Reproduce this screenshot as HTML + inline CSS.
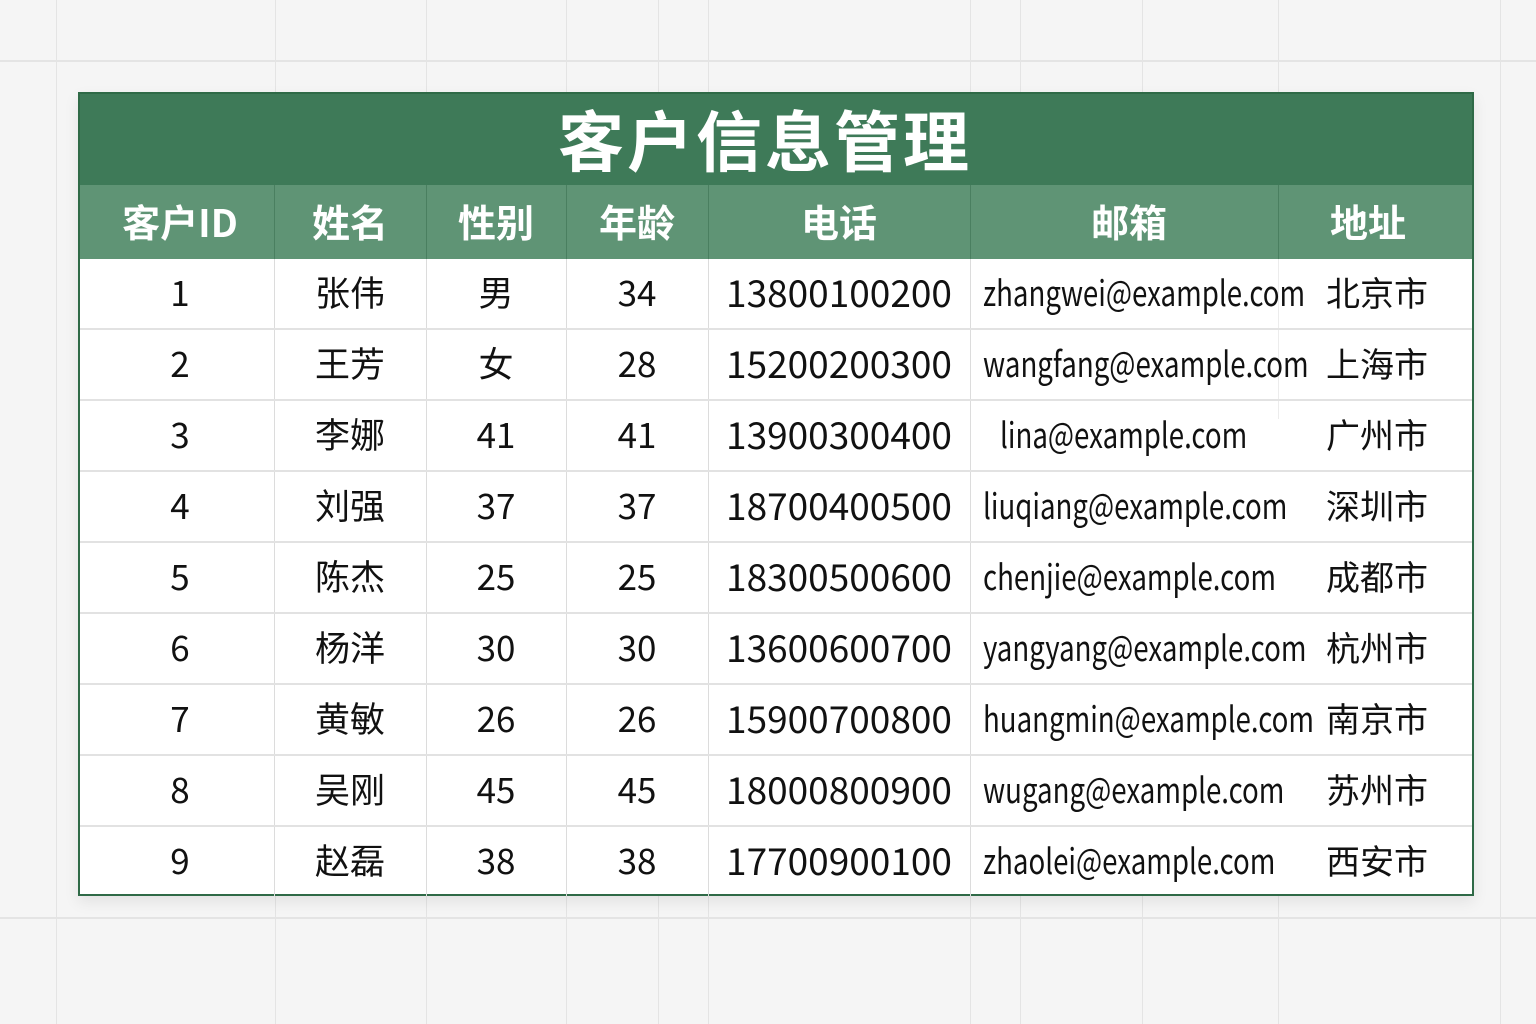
<!DOCTYPE html>
<html><head><meta charset="utf-8"><style>
*{margin:0;padding:0;box-sizing:border-box}
body{width:1536px;height:1024px;background:#f5f5f5;position:relative;overflow:hidden;font-family:"Liberation Sans","Noto Sans CJK SC",sans-serif}
.v{position:absolute;top:0;width:1px;height:1024px;background:#e4e4e4}
.h{position:absolute;left:0;height:2px;width:1536px;background:#e4e4e4}
#tbl{position:absolute;left:78px;top:92px;width:1396px;height:804px;background:#fff;border:2px solid #2f6a47;box-shadow:0 6px 14px rgba(0,0,0,.08)}
#title{position:absolute;left:0;top:0;width:100%;height:91px;background:#3e7a58;color:#fff;font:700 66px "Noto Sans CJK SC",sans-serif;text-align:center;line-height:88px;letter-spacing:3px;padding-right:22px}
#hdr{position:absolute;left:0;top:91px;width:100%;height:74px;background:#5f9475}
.t{position:absolute;font-family:"Noto Sans CJK SC",sans-serif;text-align:center;white-space:nowrap;color:#111}
.hd{color:#fff;font-weight:700;font-size:38px;line-height:72px;top:91px}
.cl{position:absolute;width:1px;background:#dcdcdc}
.hl{position:absolute;left:0;width:100%;height:2px;background:#e2e2e2}
.c{font-size:35px;height:71px;line-height:71px}
.e{position:absolute;font-family:"Noto Sans CJK SC",sans-serif;font-size:35px;line-height:71px;height:71px;transform:scaleX(.79);transform-origin:left center;white-space:nowrap;color:#111}
</style></head><body>
<div class="h" style="top:60px"></div><div class="h" style="top:917px"></div>
<div class="v" style="left:56px"></div><div class="v" style="left:275px"></div><div class="v" style="left:426px"></div><div class="v" style="left:566px"></div><div class="v" style="left:658px"></div><div class="v" style="left:708px"></div><div class="v" style="left:970px"></div><div class="v" style="left:1020px"></div><div class="v" style="left:1142px"></div><div class="v" style="left:1278px"></div><div class="v" style="left:1500px"></div>
<div id="tbl">
<div id="title">客户信息管理</div>
<div id="hdr"></div>
<div class="cl" style="left:194px;top:91px;height:711px"></div>
<div class="cl" style="left:346px;top:91px;height:711px"></div>
<div class="cl" style="left:486px;top:91px;height:711px"></div>
<div class="cl" style="left:628px;top:91px;height:711px"></div>
<div class="cl" style="left:890px;top:91px;height:711px"></div>
<div class="cl" style="left:1198px;top:91px;height:234px;background:#ececec"></div>
<div style="position:absolute;left:194px;top:91px;width:1px;height:74px;background:#4a7f60"></div>
<div style="position:absolute;left:346px;top:91px;width:1px;height:74px;background:#4a7f60"></div>
<div style="position:absolute;left:486px;top:91px;width:1px;height:74px;background:#4a7f60"></div>
<div style="position:absolute;left:628px;top:91px;width:1px;height:74px;background:#4a7f60"></div>
<div style="position:absolute;left:890px;top:91px;width:1px;height:74px;background:#4a7f60"></div>
<div style="position:absolute;left:1198px;top:91px;width:1px;height:74px;background:#4a7f60"></div>
<div class="t hd" style="left:0;width:200px">客户ID</div>
<div class="t hd" style="left:194px;width:152px">姓名</div>
<div class="t hd" style="left:346px;width:140px">性别</div>
<div class="t hd" style="left:486px;width:142px">年龄</div>
<div class="t hd" style="left:628px;width:262px">电话</div>
<div class="t hd" style="left:890px;width:318px">邮箱</div>
<div class="t hd" style="left:1198px;width:180px">地址</div>
<div class="hl" style="top:234px"></div><div class="hl" style="top:305px"></div><div class="hl" style="top:376px"></div><div class="hl" style="top:447px"></div><div class="hl" style="top:518px"></div><div class="hl" style="top:589px"></div><div class="hl" style="top:660px"></div><div class="hl" style="top:731px"></div>
</div>
<div id="rows"></div>
<script>
var d=[["1","张伟","男","34","13800100200","zhangwei@example.com","北京市",983],
["2","王芳","女","28","15200200300","wangfang@example.com","上海市",983],
["3","李娜","41","41","13900300400","lina@example.com","广州市",1000],
["4","刘强","37","37","18700400500","liuqiang@example.com","深圳市",983],
["5","陈杰","25","25","18300500600","chenjie@example.com","成都市",983],
["6","杨洋","30","30","13600600700","yangyang@example.com","杭州市",983],
["7","黄敏","26","26","15900700800","huangmin@example.com","南京市",983],
["8","吴刚","45","45","18000800900","wugang@example.com","苏州市",983],
["9","赵磊","38","38","17700900100","zhaolei@example.com","西安市",983]];
var cols=[[80,200],[274,152],[426,140],[566,142],[708,262]];
var h="";
d.forEach(function(r,i){var top=256+i*71;
for(var j=0;j<5;j++){h+='<div class="t c" style="left:'+cols[j][0]+'px;width:'+cols[j][1]+'px;top:'+top+'px'+(j==4?';font-size:37px':'')+'">'+r[j]+'</div>';}
h+='<div class="e" style="left:'+r[7]+'px;top:'+top+'px">'+r[5]+'</div>';
h+='<div class="t c" style="left:1325px;width:104px;top:'+top+'px;font-size:34px">'+r[6]+'</div>';});
document.getElementById("rows").innerHTML=h;
</script>
</body></html>
